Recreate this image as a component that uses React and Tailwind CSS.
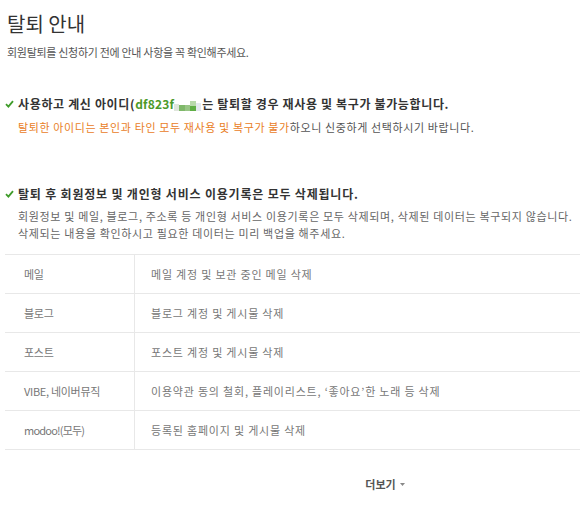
import React from "react";

const rows = [
  ["메일", "메일 계정 및 보관 중인 메일 삭제"],
  ["블로그", "블로그 계정 및 게시물 삭제"],
  ["포스트", "포스트 계정 및 게시물 삭제"],
  ["VIBE, 네이버뮤직", "이용약관 동의 철회, 플레이리스트, ‘좋아요’한 노래 등 삭제"],
  ["modoo!(모두)", "등록된 홈페이지 및 게시물 삭제"],
];

function Check() {
  return (
    <svg width="9" height="8" viewBox="0 0 9 8" className="shrink-0">
      <path d="M1 4.2 L3.4 6.6 L8 1.2" fill="none" stroke="#3f9c2a" strokeWidth="1.8" />
    </svg>
  );
}

function Mosaic() {
  return (
    <svg width="28" height="12" viewBox="0 0 28 12" className="inline-block align-middle">
      <rect x="0" y="4" width="5" height="7" fill="#dfe6dc" />
      <rect x="5" y="5" width="6" height="6" fill="#7fb86a" />
      <rect x="11" y="5" width="5" height="6" fill="#98c585" />
      <rect x="16" y="1" width="6" height="5" fill="#b8d9ab" />
      <rect x="16" y="6" width="6" height="5" fill="#5fae45" />
      <rect x="22" y="3" width="5" height="8" fill="#e4e9ef" />
    </svg>
  );
}

export default function App() {
  return (
    <div
      className="w-[580px] h-[516px] bg-white overflow-hidden text-[#333]"
      style={{ fontFamily: '"Noto Sans CJK KR", "Noto Sans", sans-serif' }}
    >
      <div className="pl-[7px] pt-[9px]">
        <h1 className="text-[20px] leading-[30px] font-normal text-[#333]">탈퇴 안내</h1>
        <p className="mt-[5px] text-[11px] leading-[16px] text-[#555] tracking-[-0.3px]">
          회원탈퇴를 신청하기 전에 안내 사항을 꼭 확인해주세요.
        </p>
      </div>

      <div className="mt-[34px] pl-[5px]">
        <div className="flex items-center gap-[4px] h-[20px]">
          <Check />
          <span className="text-[12px] font-bold tracking-[0.65px] text-[#333] whitespace-nowrap">
            사용하고 계신 아이디(<span className="text-[#4c9a2a] tracking-[0.2px]">df823f</span>
            <Mosaic />는 탈퇴할 경우 재사용 및 복구가 불가능합니다.
          </span>
        </div>
        <p className="pl-[13px] mt-[4px] text-[11px] leading-[18px] text-[#555] tracking-[0.62px] whitespace-nowrap">
          <span className="text-[#e9801f]">탈퇴한 아이디는 본인과 타인 모두 재사용 및 복구가 불가</span>
          하오니 신중하게 선택하시기 바랍니다.
        </p>
      </div>

      <div className="mt-[48px] pl-[5px]">
        <div className="flex items-center gap-[4px] h-[20px]">
          <Check />
          <span className="text-[12px] font-bold tracking-[0.8px] text-[#333] whitespace-nowrap">
            탈퇴 후 회원정보 및 개인형 서비스 이용기록은 모두 삭제됩니다.
          </span>
        </div>
        <p className="pl-[13px] mt-[4px] text-[11px] leading-[17px] text-[#666] tracking-[0.66px] whitespace-nowrap">
          회원정보 및 메일, 블로그, 주소록 등 개인형 서비스 이용기록은 모두 삭제되며, 삭제된 데이터는 복구되지 않습니다.
          <br />
          삭제되는 내용을 확인하시고 필요한 데이터는 미리 백업을 해주세요.
        </p>
      </div>

      <div className="mt-[12px] ml-[5px] border-t border-[#e8e8e8]">
        {rows.map(([a, b], i) => (
          <div key={a} className="flex h-[39px] border-b border-[#e8e8e8] text-[11px] text-[#777]">
            <div
              className={
                i === 4
                  ? "w-[130px] shrink-0 border-r border-[#e8e8e8] flex items-center pl-[19px] tracking-[-0.8px]"
                  : "w-[130px] shrink-0 border-r border-[#e8e8e8] flex items-center pl-[19px] tracking-[-0.3px]"
              }
            >
              {a}
            </div>
            <div className="flex items-center pl-[16px] tracking-[0.8px] whitespace-nowrap">{b}</div>
          </div>
        ))}
      </div>

      <div className="mt-[26px] flex justify-center pl-[190px]">
        <span className="text-[11px] font-bold text-[#555] flex items-center gap-[4px]">
          더보기
          <svg width="5" height="3" viewBox="0 0 5 3">
            <path d="M0 0 L5 0 L2.5 3 Z" fill="#888" />
          </svg>
        </span>
      </div>
    </div>
  );
}
